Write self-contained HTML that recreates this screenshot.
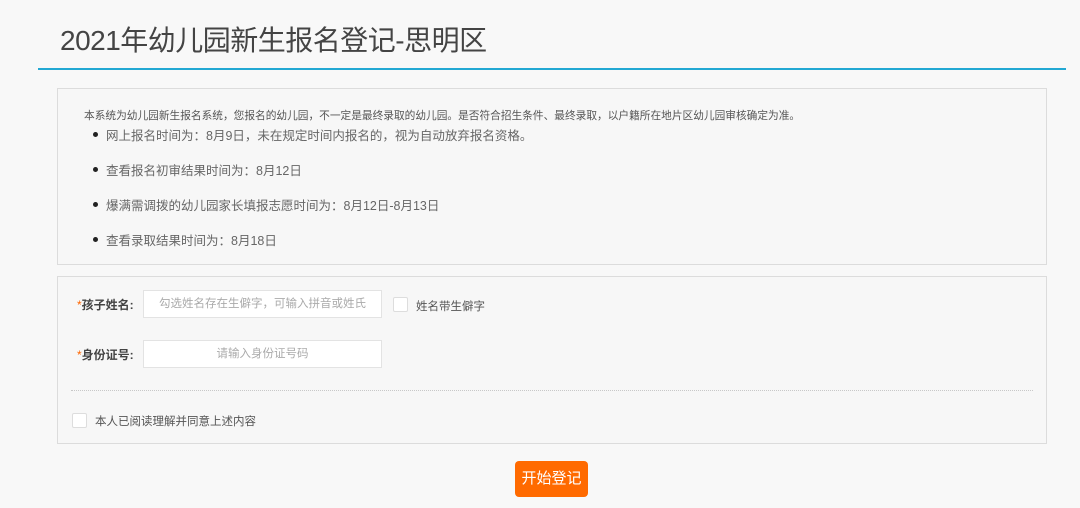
<!DOCTYPE html>
<html><head><meta charset="utf-8"><style>
*{margin:0;padding:0;box-sizing:border-box}
body{width:1080px;height:508px;background:#f8f8f8;font-family:"Liberation Sans","Noto Sans CJK SC",sans-serif;position:relative;overflow:hidden;color:#555}
.t{position:absolute;left:60px;top:19px;font-size:28px;color:#444;letter-spacing:-0.5px}
.line{position:absolute;left:38px;top:68px;width:1028px;height:2px;background:#22a8d3}
.box{position:absolute;left:57px;width:990px;border:1px solid #dcdcdc;background:#f7f7f7}
.b1{top:88px;height:177px}
.b2{top:276px;height:168px}
.s{position:absolute;font-size:10.7px;color:#555;white-space:nowrap}
.li{position:absolute;left:106px;font-size:12.5px;color:#666;white-space:nowrap}
.li:before{content:"";position:absolute;left:-13px;top:7px;width:5px;height:5px;border-radius:50%;background:#222}
.lab{position:absolute;left:77px;font-size:12px;font-weight:bold;color:#444}
.lab b{color:#f60;font-weight:normal}
.in{position:absolute;left:143px;width:239px;height:28px;border:1px solid #e3e3e3;background:#fff;font-size:11.5px;color:#aaa;text-align:center;line-height:26px}
.cb{position:absolute;width:15px;height:15px;border:1px solid #ddd;background:#fff;border-radius:2px}
.btn{position:absolute;left:515px;top:461px;width:73px;height:36px;background:#ff6a00;border-radius:4px;color:#fff;font-size:15px;text-align:center;line-height:36px}
</style></head><body>
<div class="t">2021年幼儿园新生报名登记-思明区</div>
<div class="line"></div>
<div class="box b1"></div>
<div class="s" style="left:84px;top:108px">本系统为幼儿园新生报名系统，您报名的幼儿园，不一定是最终录取的幼儿园。是否符合招生条件、最终录取，以户籍所在地片区幼儿园审核确定为准。</div>
<div class="li" style="top:125px">网上报名时间为：8月9日，未在规定时间内报名的，视为自动放弃报名资格。</div>
<div class="li" style="top:160px">查看报名初审结果时间为：8月12日</div>
<div class="li" style="top:195px">爆满需调拨的幼儿园家长填报志愿时间为：8月12日-8月13日</div>
<div class="li" style="top:230px">查看录取结果时间为：8月18日</div>
<div class="box b2"></div>
<div class="lab" style="top:296px"><b>*</b>孩子姓名:</div>
<div class="in" style="top:290px">勾选姓名存在生僻字，可输入拼音或姓氏</div>
<div class="cb" style="left:393px;top:297px"></div>
<div class="s" style="left:416px;top:298px;font-size:11.5px">姓名带生僻字</div>
<div class="lab" style="top:346px"><b>*</b>身份证号:</div>
<div class="in" style="top:340px">请输入身份证号码</div>
<div style="position:absolute;left:71px;top:390px;width:962px;border-top:1px dotted #c8c8c8"></div>
<div class="cb" style="left:72px;top:413px"></div>
<div class="s" style="left:95px;top:413px;font-size:11.5px">本人已阅读理解并同意上述内容</div>
<div class="btn">开始登记</div>
</body></html>
